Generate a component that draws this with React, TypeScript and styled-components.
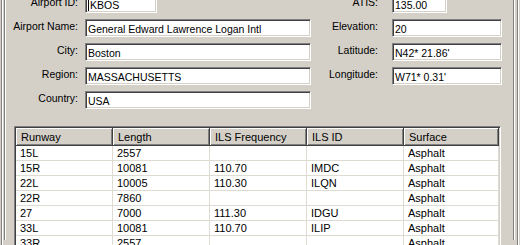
import React from "react";
import styled, { createGlobalStyle } from "styled-components";

const Global = createGlobalStyle`
  html, body { margin: 0; padding: 0; background: #d4d0c8; overflow: hidden; }
  body { font-family: "Liberation Sans", Arial, sans-serif; color: #000; }
`;

const Frame = styled.div`
  box-sizing: border-box;
  margin-left: 1px;
  width: 517px;
  height: 245px;
  border-left: 1px solid #808080;
  border-right: 1px solid #808080;
  box-shadow: inset 1px 0 0 #fff, 1px 0 0 #fff;
  padding: 0 3px 0 2px;
  overflow: hidden;
`;

const Panel = styled.div`
  box-sizing: border-box;
  height: 100%;
  border-left: 1px solid #808080;
  border-right: 1px solid #808080;
  box-shadow: inset 1px 0 0 #fff, 1px 0 0 #fff;
  padding: 0 0 0 2px;
`;

const Form = styled.div`
  display: grid;
  grid-template-columns: 71px 226px 67px 110px;
  grid-auto-rows: 18px;
  column-gap: 7px;
  row-gap: 6px;
  margin-top: -5px;
`;

const Label = styled.div<{ $right?: boolean }>`
  font-size: 10.5px;
  line-height: 14px;
  text-align: right;
  white-space: nowrap;
  padding-right: ${(p) => (p.$right ? "7px" : "0")};
  grid-column: ${(p) => (p.$right ? 3 : 1)};
`;

const Field = styled.div<{ $w?: number; $col: number }>`
  box-sizing: border-box;
  grid-column: ${(p) => p.$col};
  width: ${(p) => (p.$w ? `${p.$w}px` : "100%")};
  height: 18px;
  background: #fff;
  border-top: 1px solid #808080;
  border-left: 1px solid #808080;
  border-bottom: 1px solid #fff;
  border-right: 1px solid #fff;
  box-shadow: inset 1px 1px 0 #404040, inset -1px -1px 0 #d4d0c8;
  padding: 1px 2px 0 2px;
  font-size: 10.5px;
  line-height: 14px;
  white-space: nowrap;
  overflow: hidden;
  display: flex;
  align-items: center;
`;

const Caret = styled.span`
  display: inline-block;
  width: 1px;
  height: 13px;
  background: #000;
  margin-right: 1px;
`;

const Spacer = styled.div<{ $col: number }>`
  grid-column: ${(p) => p.$col};
`;

const Pane = styled.div`
  box-sizing: border-box;
  margin: 17px 0 0 7px;
  width: 487px;
  height: 200px;
  border-top: 1px solid #808080;
  border-left: 1px solid #808080;
  border-bottom: 1px solid #fff;
  border-right: 1px solid #fff;
  box-shadow: inset 1px 1px 0 #404040, inset -1px -1px 0 #d4d0c8;
  padding: 1px;
  overflow: hidden;
`;

const Grid = styled.table`
  table-layout: fixed;
  border-collapse: separate;
  border-spacing: 0;
  width: 483px;
  font-size: 11px;
`;

const Head = styled.th`
  box-sizing: border-box;
  height: 18px;
  padding: 0 5px;
  font-weight: normal;
  text-align: left;
  background: #d4d0c8;
  border-right: 1px solid #404040;
  border-bottom: 1px solid #404040;
  box-shadow: inset 1px 1px 0 #fff, inset -1px -1px 0 #808080;
  white-space: nowrap;
  overflow: hidden;
`;

const Cell = styled.td`
  box-sizing: border-box;
  height: 15px;
  padding: 0 4px;
  background: #fff;
  border-right: 1px solid #dedbd2;
  border-bottom: 1px solid #dedbd2;
  white-space: nowrap;
  overflow: hidden;
  line-height: 14px;
`;

const columns = [
  { name: "Runway", w: 97 },
  { name: "Length", w: 97 },
  { name: "ILS Frequency", w: 97 },
  { name: "ILS ID", w: 97 },
  { name: "Surface", w: 95 },
];

const rows = [
  ["15L", "2557", "", "", "Asphalt"],
  ["15R", "10081", "110.70", "IMDC", "Asphalt"],
  ["22L", "10005", "110.30", "ILQN", "Asphalt"],
  ["22R", "7860", "", "", "Asphalt"],
  ["27", "7000", "111.30", "IDGU", "Asphalt"],
  ["33L", "10081", "110.70", "ILIP", "Asphalt"],
  ["33R", "2557", "", "", "Asphalt"],
];

export default function App() {
  return (
    <>
      <Global />
      <Frame>
        <Panel>
          <Form>
            <Label>Airport ID:</Label>
            <Field $col={2} $w={72}>
              <Caret />
              KBOS
            </Field>
            <Label $right>ATIS:</Label>
            <Field $col={4} $w={55}>135.00</Field>

            <Label>Airport Name:</Label>
            <Field $col={2}>General Edward Lawrence Logan Intl</Field>
            <Label $right>Elevation:</Label>
            <Field $col={4}>20</Field>

            <Label>City:</Label>
            <Field $col={2}>Boston</Field>
            <Label $right>Latitude:</Label>
            <Field $col={4}>N42* 21.86'</Field>

            <Label>Region:</Label>
            <Field $col={2}>MASSACHUSETTS</Field>
            <Label $right>Longitude:</Label>
            <Field $col={4}>W71* 0.31'</Field>

            <Label>Country:</Label>
            <Field $col={2}>USA</Field>
            <Spacer $col={3} />
          </Form>
          <Pane>
            <Grid>
              <colgroup>
                {columns.map((c) => (
                  <col key={c.name} style={{ width: c.w }} />
                ))}
              </colgroup>
              <thead>
                <tr>
                  {columns.map((c) => (
                    <Head key={c.name}>{c.name}</Head>
                  ))}
                </tr>
              </thead>
              <tbody>
                {rows.map((r, i) => (
                  <tr key={i}>
                    {r.map((v, j) => (
                      <Cell key={j}>{v}</Cell>
                    ))}
                  </tr>
                ))}
              </tbody>
            </Grid>
          </Pane>
        </Panel>
      </Frame>
    </>
  );
}
